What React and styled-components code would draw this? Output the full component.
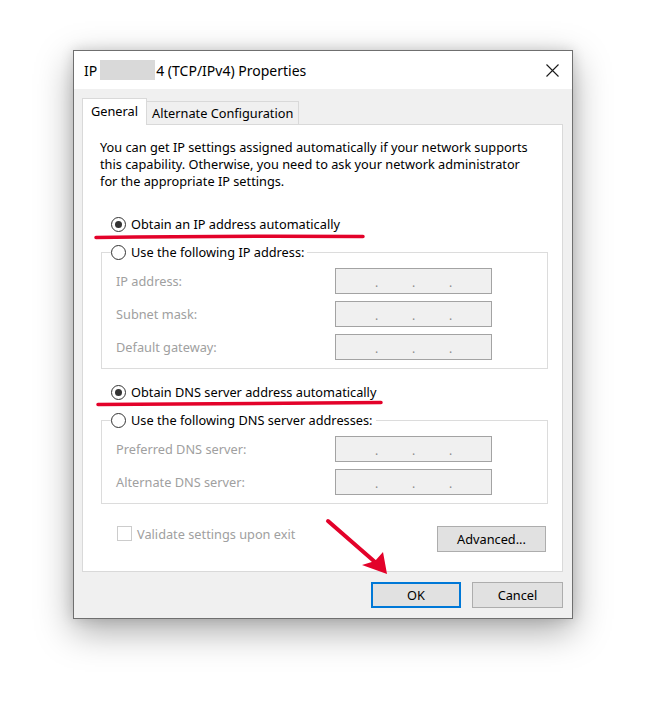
import React from 'react';
import styled, { createGlobalStyle } from 'styled-components';

const GlobalStyle = createGlobalStyle`
  html, body {
    margin: 0;
    background: #ffffff;
  }
  body {
    font-family: "Noto Sans", "Open Sans", sans-serif;
    font-size: 12.75px;
    color: #000;
  }
`;

const Page = styled.div`
  width: 646px;
  height: 712px;
  padding: 50px 0 0 73px;
  box-sizing: border-box;
`;

const Dialog = styled.div`
  position: relative;
  width: 500px;
  box-sizing: border-box;
  border: 1px solid #6f6f6f;
  background: #f0f0f0;
  box-shadow: 0 12px 34px rgba(0, 0, 0, 0.34), 0 0 12px rgba(0, 0, 0, 0.14);
`;

const TitleBar = styled.div`
  display: flex;
  align-items: center;
  height: 38px;
  background: #ffffff;
  padding-left: 10px;
`;

const Title = styled.div`
  flex: 1;
  display: flex;
  align-items: center;
  font-size: 14px;
  white-space: pre;
`;

const Redacted = styled.span`
  display: inline-block;
  width: 55px;
  height: 20px;
  margin: 0 1px 0 3px;
  background: #d9d9d9;
`;

const CloseButton = styled.div`
  width: 40px;
  height: 38px;
  display: flex;
  align-items: center;
  justify-content: center;
`;

const Body = styled.div`
  padding: 9px 9px 10px 8px;
`;

const TabRow = styled.div`
  display: flex;
  align-items: flex-end;
  position: relative;
  z-index: 1;
  margin-bottom: -1px;
`;

const Tab = styled.div`
  box-sizing: border-box;
  border: 1px solid #d9d9d9;
  border-bottom: none;
  display: flex;
  align-items: center;
  justify-content: center;
  white-space: nowrap;
  height: ${p => (p.$active ? '27px' : '23px')};
  padding: 0 ${p => (p.$active ? '8px' : '5px')};
  margin-bottom: ${p => (p.$active ? '0' : '1px')};
  margin-left: ${p => (p.$active ? '0' : '-1px')};
  background: ${p => (p.$active ? '#ffffff' : '#f0f0f0')};
  padding-bottom: ${p => (p.$active ? '3px' : '0')};
`;

const Panel = styled.div`
  box-sizing: border-box;
  height: 448px;
  border: 1px solid #d9d9d9;
  background: #ffffff;
  padding: 14px 14px 0 18px;
  display: flex;
  flex-direction: column;
`;

const Description = styled.p`
  margin: 0 0 0 -1px;
  line-height: 17px;
  white-space: nowrap;
`;

const RadioRow = styled.label`
  display: flex;
  align-items: center;
  gap: 5px;
  height: 17px;
  line-height: 17px;
  white-space: nowrap;
  margin-left: 10px;
  margin-top: ${p => p.$top}px;
`;

const RadioCircle = styled.span`
  box-sizing: border-box;
  flex: none;
  width: 15px;
  height: 15px;
  border-radius: 50%;
  border: 1px solid #333333;
  background: #ffffff;
  display: flex;
  align-items: center;
  justify-content: center;
  &::after {
    content: '';
    width: 7px;
    height: 7px;
    border-radius: 50%;
    background: #333333;
    display: ${p => (p.$checked ? 'block' : 'none')};
  }
`;

const GroupBox = styled.div`
  border: 1px solid #dcdcdc;
  margin-top: 19px;
  padding: 0 55px 8px 14px;
  display: flex;
  flex-direction: column;
  gap: 7px;
`;

const GroupLegend = styled(RadioRow)`
  align-self: flex-start;
  background: #ffffff;
  padding-right: 3px;
  margin: -9px 0 0 -5px;
`;

const FieldRow = styled.div`
  display: flex;
  align-items: center;
  justify-content: space-between;
  height: 26px;
`;

const FieldLabel = styled.span`
  color: #a0a0a0;
`;

const IpBox = styled.div`
  box-sizing: border-box;
  width: 157px;
  height: 26px;
  border: 1px solid #a3a3a3;
  background: #f0f0f0;
  display: flex;
  justify-content: center;
  align-items: flex-end;
  padding-bottom: 4px;
  color: #8c8c8c;
  font-size: 12px;
  line-height: 12px;
`;

const Dot = styled.span`
  width: 37px;
  text-align: center;
`;

const BottomRow = styled.div`
  display: flex;
  justify-content: space-between;
  align-items: flex-start;
  margin-top: 21px;
`;

const CheckRow = styled.label`
  display: flex;
  align-items: center;
  gap: 5px;
  height: 17px;
  margin-left: 16px;
  color: #a0a0a0;
`;

const CheckBox = styled.span`
  box-sizing: border-box;
  width: 15px;
  height: 15px;
  border: 1px solid #cccccc;
  background: #ffffff;
`;

const Button = styled.div`
  box-sizing: border-box;
  width: ${p => p.$width}px;
  height: 26px;
  display: flex;
  align-items: center;
  justify-content: center;
  background: #e1e1e1;
  border: 1px solid ${p => (p.$default ? '#0078d7' : '#adadad')};
  box-shadow: ${p => (p.$default ? 'inset 0 0 0 1px #0078d7' : 'none')};
`;

const AdvancedButton = styled(Button)`
  margin: 1px 2px 0 0;
`;

const ButtonBar = styled.div`
  display: flex;
  justify-content: flex-end;
  gap: 11px;
  margin-top: 10px;
`;

const Annotations = styled.svg`
  position: absolute;
  left: 0;
  top: 0;
  pointer-events: none;
  overflow: visible;
`;

const IpField = () => (
  <IpBox>
    <Dot>.</Dot>
    <Dot>.</Dot>
    <Dot>.</Dot>
  </IpBox>
);

const Field = ({ label }) => (
  <FieldRow>
    <FieldLabel>{label}</FieldLabel>
    <IpField />
  </FieldRow>
);

const Radio = ({ checked, children, top, as }) => {
  const Row = as || RadioRow;
  return (
    <Row $top={top}>
      <RadioCircle $checked={checked} />
      {children}
    </Row>
  );
};

export default function App() {
  return (
    <>
      <GlobalStyle />
      <Page>
        <Dialog>
          <TitleBar>
            <Title>
              IP<Redacted />4 (TCP/IPv4) Properties
            </Title>
            <CloseButton>
              <svg width="13" height="13" viewBox="0 0 13 13">
                <path d="M0.5 0.5 L12.5 12.5 M12.5 0.5 L0.5 12.5" stroke="#1a1a1a" strokeWidth="1.1" />
              </svg>
            </CloseButton>
          </TitleBar>

          <Body>
            <TabRow>
              <Tab $active>General</Tab>
              <Tab>Alternate Configuration</Tab>
            </TabRow>

            <Panel>
              <Description>
                You can get IP settings assigned automatically if your network supports
                <br />
                this capability. Otherwise, you need to ask your network administrator
                <br />
                for the appropriate IP settings.
              </Description>

              <Radio checked top={26}>Obtain an IP address automatically</Radio>

              <GroupBox>
                <Radio as={GroupLegend}>Use the following IP address:</Radio>
                <Field label="IP address:" />
                <Field label="Subnet mask:" />
                <Field label="Default gateway:" />
              </GroupBox>

              <Radio checked top={15}>Obtain DNS server address automatically</Radio>

              <GroupBox>
                <Radio as={GroupLegend}>Use the following DNS server addresses:</Radio>
                <Field label="Preferred DNS server:" />
                <Field label="Alternate DNS server:" />
              </GroupBox>

              <BottomRow>
                <CheckRow>
                  <CheckBox />
                  Validate settings upon exit
                </CheckRow>
                <AdvancedButton $width={109}>Advanced...</AdvancedButton>
              </BottomRow>
            </Panel>

            <ButtonBar>
              <Button $width={90} $default>OK</Button>
              <Button $width={91}>Cancel</Button>
            </ButtonBar>
          </Body>

          <Annotations width="500" height="569">
            <path d="M22 186.5 Q150 184.5 289 185.5" stroke="#e3022a" strokeWidth="3.5" fill="none" strokeLinecap="round" />
            <path d="M24 353.5 Q160 352.5 307 351.5" stroke="#e3022a" strokeWidth="3.5" fill="none" strokeLinecap="round" />
            <path d="M254 470 L301 511" stroke="#e3022a" strokeWidth="4" strokeLinecap="round" />
            <path d="M313 523 L288 514 L301 510 L309 501 Z" fill="#e3022a" />
          </Annotations>
        </Dialog>
      </Page>
    </>
  );
}
